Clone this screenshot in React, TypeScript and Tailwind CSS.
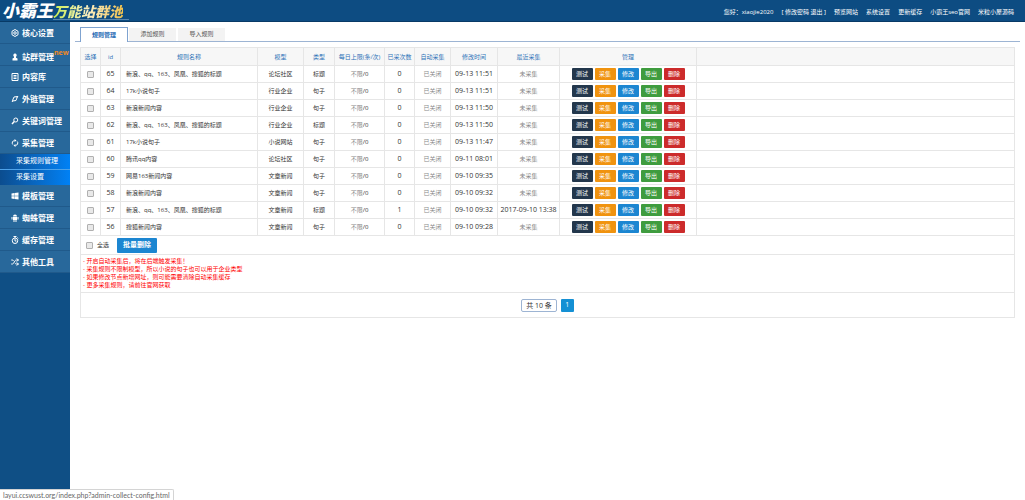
import type { ReactNode } from 'react'
import { clsx } from 'clsx'
import { FaWindows } from 'react-icons/fa'
import { Shuffle } from 'lucide-react'

interface Rule {
  id: number
  name: string
  model: string
  type: string
  count: number
  modified: string
  collected?: string
}

const RULES: Rule[] = [
  { id: 65, name: '新浪、qq、163、凤凰、搜狐的标题', model: '论坛社区', type: '标题', count: 0, modified: '09-13 11:51' },
  { id: 64, name: '17k小说句子', model: '行业企业', type: '句子', count: 0, modified: '09-13 11:51' },
  { id: 63, name: '新浪新闻内容', model: '行业企业', type: '句子', count: 0, modified: '09-13 11:50' },
  { id: 62, name: '新浪、qq、163、凤凰、搜狐的标题', model: '行业企业', type: '标题', count: 0, modified: '09-13 11:50' },
  { id: 61, name: '17k小说句子', model: '小说网站', type: '句子', count: 0, modified: '09-13 11:47' },
  { id: 60, name: '腾讯qq内容', model: '论坛社区', type: '句子', count: 0, modified: '09-11 08:01' },
  { id: 59, name: '网易163新闻内容', model: '文章新闻', type: '句子', count: 0, modified: '09-10 09:35' },
  { id: 58, name: '新浪新闻内容', model: '文章新闻', type: '句子', count: 0, modified: '09-10 09:32' },
  { id: 57, name: '新浪、qq、163、凤凰、搜狐的标题', model: '文章新闻', type: '标题', count: 1, modified: '09-10 09:32', collected: '2017-09-10 13:38' },
  { id: 56, name: '搜狐新闻内容', model: '文章新闻', type: '句子', count: 0, modified: '09-10 09:28' },
]

const COLUMNS = [
  { title: '选择', width: 'w-5' },
  { title: 'id', width: 'w-5' },
  { title: '规则名称', width: 'w-[137px]' },
  { title: '模型', width: 'w-[46px]' },
  { title: '类型', width: 'w-[31px]' },
  { title: '每日上限(条/次)', width: 'w-[50px]' },
  { title: '已采次数', width: 'w-[30px]' },
  { title: '自动采集', width: 'w-9' },
  { title: '修改时间', width: 'w-[47px]' },
  { title: '最近采集', width: 'w-[62px]' },
  { title: '管理', width: 'w-[137px]' },
  { title: '', width: 'w-auto' },
]

const ACTIONS = [
  { label: '测试', color: 'bg-[#23374c]' },
  { label: '采集', color: 'bg-[#f0930f]' },
  { label: '修改', color: 'bg-[#1c86d1]' },
  { label: '导出', color: 'bg-[#3f9c3f]' },
  { label: '删除', color: 'bg-[#cc2b2b]' },
]

const TIPS = [
  '开启自动采集后，将在后端触发采集！',
  '采集规则不限制模型，所以小说的句子也可以用于企业类型',
  '如果修改节点新增网址，则可能需要清除自动采集缓存',
  '更多采集规则，请前往官网获取',
]

const TOP_LINKS = ['预览网站', '系统设置', '更新缓存', '小霸王seo官网', '米粒小屋源码']

function Glyph({ children }: { children: ReactNode }) {
  return (
    <svg viewBox="0 0 16 16" className="size-2 shrink-0" fill="none" stroke="currentColor" strokeWidth="2" aria-hidden="true">
      {children}
    </svg>
  )
}

function MenuItem({ icon, label, isNew }: { icon: ReactNode; label: string; isNew?: boolean }) {
  return (
    <li className="border-b border-[#205a8b] bg-[#28689b]">
      <a href="#" className={clsx('flex h-[21px] items-center gap-[3px] pl-[11px]', isNew && 'pt-1')}>
        {icon}
        <span className="font-bold">{label}</span>
        {isNew && <sup className="-ml-[3px] text-[7px] font-bold text-[#f08a1d]">new</sup>}
      </a>
    </li>
  )
}

function Sidebar() {
  return (
    <nav className="w-[70px] shrink-0 bg-[#0f4f85] text-[8px] whitespace-nowrap text-white">
      <ul>
        <MenuItem
          icon={
            <Glyph>
              <path d="M8 1l6 3.5v7L8 15l-6-3.5v-7z" />
              <circle cx="8" cy="8" r="2.5" />
            </Glyph>
          }
          label="核心设置"
        />
        <MenuItem
          icon={
            <Glyph>
              <path d="M8 1a3.5 3.5 0 0 1 2 6.3v2l3 1.7v4H3v-4l3-1.7v-2A3.5 3.5 0 0 1 8 1z" fill="currentColor" stroke="none" />
            </Glyph>
          }
          label="站群管理"
          isNew
        />
        <MenuItem
          icon={
            <Glyph>
              <path d="M2 1h12v14H2zM5 5h6M5 8h6M5 11h6" />
            </Glyph>
          }
          label="内容库"
        />
        <MenuItem
          icon={
            <Glyph>
              <path d="M3 11L6 4l7-1-3 8-7 1zM2 14l2-3M12 5l2-3" />
            </Glyph>
          }
          label="外链管理"
        />
        <MenuItem
          icon={
            <Glyph>
              <circle cx="9.5" cy="6" r="4" />
              <path d="M6.5 9L2 14" strokeWidth="3" />
            </Glyph>
          }
          label="关键词管理"
        />
        <MenuItem
          icon={
            <Glyph>
              <path d="M7 3a5 5 0 0 0-3.5 8M9 13a5 5 0 0 0 3.5-8" />
              <path d="M7 0l4 3-4 3zM9 10v6l-4-3z" fill="currentColor" stroke="none" />
            </Glyph>
          }
          label="采集管理"
        />
        <li className="text-[7px]">
          <a href="#" className="flex h-4 items-center border-b border-[#4fa3ea] bg-linear-to-r from-[#0b4d8f] to-[#0081f5] pl-4">
            采集规则管理
          </a>
          <a href="#" className="flex h-[15px] items-center bg-linear-to-r from-[#0b4d8f] to-[#0081f5] pl-4">
            采集设置
          </a>
        </li>
        <MenuItem icon={<FaWindows className="size-2 shrink-0" />} label="模板管理" />
        <MenuItem
          icon={
            <Glyph>
              <path d="M4 5a4 4 0 0 1 8 0zM4 6h8v6H4zM1 6h2v5H1zM13 6h2v5h-2zM5 12h2v4H5zM9 12h2v4H9z" fill="currentColor" stroke="none" />
            </Glyph>
          }
          label="蜘蛛管理"
        />
        <MenuItem
          icon={
            <Glyph>
              <circle cx="8" cy="9.5" r="5.5" />
              <path d="M5 1h6M8 1v3M8 6v4h3M13 3l1.5 1.5" />
            </Glyph>
          }
          label="缓存管理"
        />
        <MenuItem icon={<Shuffle className="size-2 shrink-0" strokeWidth={3} />} label="其他工具" />
      </ul>
    </nav>
  )
}

function Header() {
  return (
    <header className="flex h-[22px] items-center justify-between border-b border-[#083a66] bg-[#0d4c82] pr-[11px] text-[6px] whitespace-nowrap text-white">
      <a href="#" className="flex items-baseline pl-0.5 leading-none font-black italic">
        <span className="text-[17px]">小霸王</span>
        <span className="border-b border-[#5a86ad] pr-1.5">
          <span className="bg-linear-to-r from-[#c9ee4a] via-[#fbeec0] to-[#f0c04a] bg-clip-text text-[14px] text-transparent">
            万能站群池
          </span>
        </span>
      </a>
      <div className="flex gap-2 pt-1">
        <span>您好：xiaojie2020</span>
        <span>
          [ <a href="#">修改密码</a> <a href="#">退出</a> ]
        </span>
        {TOP_LINKS.map((link) => (
          <a key={link} href="#">
            {link}
          </a>
        ))}
      </div>
    </header>
  )
}

function Checkbox({ label }: { label: string }) {
  return (
    <input
      type="checkbox"
      aria-label={label}
      className="block size-[7px] shrink-0 appearance-none rounded-[1px] border border-[#b0b0b0] bg-[#e9e9e9]"
    />
  )
}

function Tabs() {
  return (
    <div className="flex h-[15px] items-end border-b border-[#9db4d3] text-[6px]">
      <button className="ml-[5px] -mb-px h-[15px] w-12 border border-b-0 border-[#7fa3d0] bg-white font-bold text-[#2a6cb5]">
        规则管理
      </button>
      <button className="ml-px h-[13px] w-[47px] bg-[#f3f3f3] text-[#555]">添加规则</button>
      <button className="ml-0.5 h-[13px] w-[47px] bg-[#f3f3f3] text-[#555]">导入规则</button>
    </div>
  )
}

function RuleRow({ rule }: { rule: Rule }) {
  return (
    <tr className="h-[17px] text-center *:border *:border-[#e6e6e6]">
      <td>
        <div className="flex justify-center">
          <Checkbox label={rule.name} />
        </div>
      </td>
      <td className="text-[7px]">{rule.id}</td>
      <td className="pl-[5px] text-left">{rule.name}</td>
      <td>{rule.model}</td>
      <td>{rule.type}</td>
      <td>
        <span className="text-[#888]">不限</span>/0
      </td>
      <td className="text-[7px]">{rule.count}</td>
      <td className="text-[#888]">已关闭</td>
      <td className="text-[7px]">{rule.modified}</td>
      <td className={rule.collected ? 'text-[7px]' : 'text-[#888]'}>{rule.collected ?? '未采集'}</td>
      <td>
        <div className="flex justify-center gap-0.5">
          {ACTIONS.map((action) => (
            <button key={action.label} className={clsx('h-3 w-[21px] rounded-[1px] text-white', action.color)}>
              {action.label}
            </button>
          ))}
        </div>
      </td>
      <td />
    </tr>
  )
}

function RuleTable() {
  return (
    <table className="w-full table-fixed border-collapse leading-2 whitespace-nowrap">
      <thead>
        <tr className="h-[18px] bg-[#f7f7f7] text-[#2f73b8]">
          {COLUMNS.map((column) => (
            <th key={column.title} className={clsx('border border-[#e6e6e6] font-normal', column.width)}>
              {column.title}
            </th>
          ))}
        </tr>
      </thead>
      <tbody>
        {RULES.map((rule) => (
          <RuleRow key={rule.id} rule={rule} />
        ))}
      </tbody>
    </table>
  )
}

export default function App() {
  return (
    <div className="flex min-h-screen flex-col bg-white font-['Open_Sans','Noto_Sans_CJK_SC',sans-serif]">
      <Header />
      <div className="flex grow">
        <Sidebar />
        <main className="min-w-0 grow px-[5px] pt-[5px]">
          <Tabs />
          <div className="mx-[5px] mt-[5px] text-[6px] text-[#333]">
            <RuleTable />
            <div className="border border-t-0 border-[#e6e6e6]">
              <div className="flex h-[19px] items-center border-b border-[#e6e6e6] pl-[5px]">
                <label className="flex items-center gap-1">
                  <Checkbox label="全选" />
                  全选
                </label>
                <button className="ml-2 h-[15px] w-10 rounded-[1px] bg-[#1c86d1] text-[7px] font-bold text-white">批量删除</button>
              </div>
              <ul className="border-b border-[#e6e6e6] pt-0.5 pb-[3px] pl-0.5 leading-2 text-[#f00]">
                {TIPS.map((tip) => (
                  <li key={tip}>- {tip}</li>
                ))}
              </ul>
              <div className="flex h-6 items-center justify-center gap-1">
                <span className="rounded-[2px] border border-[#9db4d3] px-1 text-[7px] leading-[11px]">共 10 条</span>
                <button className="size-[13px] rounded-[1px] bg-[#1490d4] text-[7px] text-white">1</button>
              </div>
            </div>
          </div>
        </main>
      </div>
      <div className="fixed bottom-0 left-0 rounded-tr-[2px] border-t border-r border-[#d4d4d4] bg-white px-[3px] font-[Lato,sans-serif] text-[7px] leading-[10px] text-[#666]">
        layui.ccswust.org/index.php?admin-collect-config.html
      </div>
    </div>
  )
}
